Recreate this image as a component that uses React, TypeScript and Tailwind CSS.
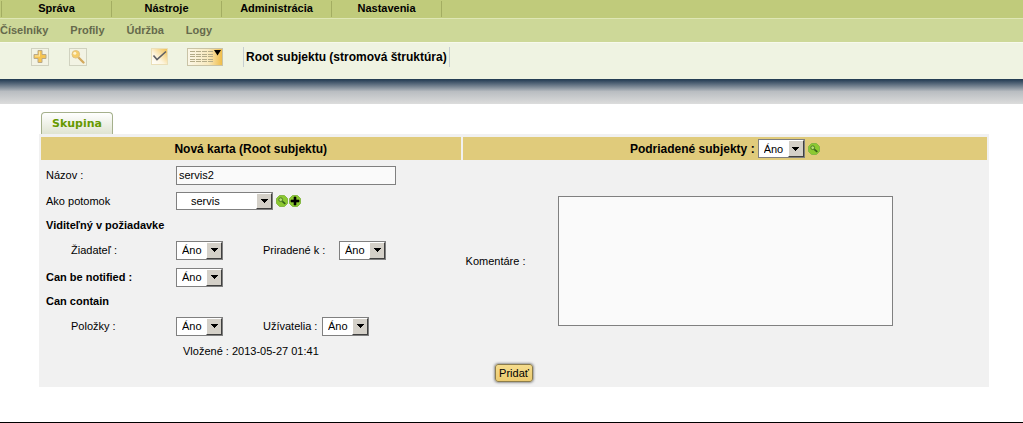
import { useState } from "react";
import type { ReactNode } from "react";

const menu = ["Správa", "Nástroje", "Administrácia", "Nastavenia"];
const submenu = ["Číselníky", "Profily", "Údržba", "Logy"];

type SelectProps = {
    id: string;
    options?: string[];
    className?: string;
}

function Select({ id, options = ["Áno", "Nie"], className = "w-[47px] h-[19px] pl-[5px]" }: SelectProps) {
    return (
        <span className="relative inline-flex">
            <select id={id} className={`appearance-none border border-[#808080] bg-white pr-4 text-[11px] leading-4 font-normal text-black outline-none ${className}`}>
                {options.map((option) => <option key={option}>{option}</option>)}
            </select>
            <span className="pointer-events-none absolute right-px top-px bottom-px flex w-4 items-center justify-center border border-t-white border-l-white border-r-[#404040] border-b-[#404040] bg-[#d4d0c8]">
                <svg width="7" height="4" viewBox="0 0 7 4" shapeRendering="crispEdges"><path d="M0 0h7v1H6v1H5v1H4v1H3V3H2V2H1V1H0z" /></svg>
            </span>
        </span>
    )
}

function GreenSearch() {
    return (
        <svg width="12" height="12" viewBox="0 0 12 12">
            <path d="M3.500 .5h5L11.500 3.500v5L8.500 11.500h-5L.5 8.500v-5z" fill="#8cc932" stroke="#86b846" />
            <circle cx="4.700" cy="4.700" r="1.900" fill="#b5e070" stroke="#4c7a28" />
            <path d="M6.300 6.300l3 2.600" stroke="#35601a" strokeWidth="1.600" />
        </svg>
    )
}

function GreenPlus() {
    return (
        <svg width="12" height="12" viewBox="0 0 12 12">
            <path d="M3.500 .5h5L11.500 3.500v5L8.500 11.500h-5L.5 8.500v-5z" fill="#8cc932" stroke="#86b846" />
            <path d="M5 2h2v3h3v2H7v3H5V7H2V5h3z" fill="#000" stroke="#000" strokeWidth=".6" />
        </svg>
    )
}

function Toolbar() {
    return (
        <div className="flex h-[37px] items-start border-t border-[#f7f9ec] bg-[#eff3e2] pl-[31px] pt-1">
            <button aria-label="Pridať kartu" className="mt-px">
                <svg width="18" height="18" viewBox="0 0 18 18">
                    <rect x=".5" y=".5" width="17" height="17" fill="#f2f3e4" stroke="#d0d2c0" />
                    <path d="M8 2.500h3v4h4v4h-4v4H7v-4H3v-4h4v-4z" fill="#f6c552" stroke="#b9a988" strokeLinejoin="round" />
                    <path d="M8 3.500v4H4v1h5v-5z" fill="#fce6a4" />
                </svg>
            </button>
            <button aria-label="Hľadať" className="mt-px ml-5">
                <svg width="18" height="18" viewBox="0 0 18 18">
                    <rect x=".5" y=".5" width="17" height="17" fill="#f2f3e4" stroke="#d0d2c0" />
                    <path d="M9.500 9.500l5 5" stroke="#d3a95e" strokeWidth="2.400" strokeLinecap="round" />
                    <circle cx="6.800" cy="6.300" r="3.800" fill="#f6cd69" stroke="#dfc182" />
                    <circle cx="5.800" cy="5.300" r="1.500" fill="#fff3cf" />
                </svg>
            </button>
            <button aria-label="Označiť" className="mt-px ml-16">
                <svg width="17" height="17" viewBox="0 0 17 17">
                    <defs>
                        <linearGradient id="checkFill" x1="1" y1="0" x2="0" y2="1">
                            <stop offset="0" stopColor="#efbd4b" />
                            <stop offset=".6" stopColor="#fdf5df" />
                            <stop offset="1" stopColor="#fff" />
                        </linearGradient>
                    </defs>
                    <rect x=".5" y=".5" width="16" height="16" fill="url(#checkFill)" stroke="#eadfb9" />
                    <path d="M2.500 7.500L6 11.500 15 3.500" fill="none" stroke="#5f6065" strokeWidth="1.600" />
                </svg>
            </button>
            <button aria-label="Zoznam" className="mt-px ml-[19px]">
                <svg width="36" height="18" viewBox="0 0 36 18">
                    <defs>
                        <linearGradient id="listFill">
                            <stop offset="0" stopColor="#fbf7e8" />
                            <stop offset=".6" stopColor="#f8e9bd" />
                            <stop offset="1" stopColor="#efbb45" />
                        </linearGradient>
                    </defs>
                    <rect x=".5" y=".5" width="35" height="17" fill="url(#listFill)" stroke="#c9c3a6" />
                    <path d="M3 3.500h23M3 6.500h23M3 8.500h23M3 11.500h23M3 13.500h23" stroke="#b3ab88" strokeDasharray="5 1" />
                    <path d="M27 2h7l-3.500 5.500z" />
                </svg>
            </button>
            <h1 className="ml-5 h-5 border-x border-[#c6ced0] px-0.5 text-[12px] leading-5 font-bold text-black">Root subjektu (stromová štruktúra)</h1>
        </div>
    )
}

function Row({ className = "h-[26px]", children }: { className?: string; children: ReactNode }) {
    return <div className={`flex items-center pl-[5px] ${className}`}>{children}</div>
}

export default function App() {
    const [nazov, setNazov] = useState("servis2");
    const [komentare, setKomentare] = useState("");

    return (
        <div className="bg-white font-['Liberation_Sans',Arial,sans-serif] text-[11px] leading-4 text-black">
            <nav className="flex h-[18px] bg-[#c0cb7b] pl-px">
                {menu.map((item) => (
                    <a key={item} href="#" className="my-px w-[110px] border-l border-[#a3ad62] text-center font-bold leading-[14px]">{item}</a>
                ))}
                <span className="my-px border-l border-[#a3ad62]" />
            </nav>
            <nav className="flex h-6 gap-[22px] border-t border-[#dfe7b5] bg-[#cdd898] font-bold leading-[23px] text-[#666a4c]">
                {submenu.map((item) => <a key={item} href="#">{item}</a>)}
            </nav>
            <Toolbar />
            <div className="h-[25px] bg-linear-to-b from-[#1f3850] via-[#b9bdc1] via-50% to-[#dcdcdc]" />

            <main className="pt-2 pr-[34px] pl-[39px]">
                <div className="pl-0.5">
                    <button className="block h-[22px] rounded-t-[4px] border border-b-0 border-[#a5b08c] bg-linear-to-b from-white to-[#dfe4d2] px-[10px] font-['DejaVu_Sans',Verdana,sans-serif] text-[11px] font-bold text-[#669900]">Skupina</button>
                </div>
                <form className="bg-[#f1f1f1] px-0.5 pt-[3px] pb-[3px]" onSubmit={(e) => e.preventDefault()}>
                    <div className="grid grid-cols-[4fr_5fr] gap-x-0.5">
                        <h2 className="flex h-[23px] items-center justify-center bg-[#e0cb7b] text-[12px] font-bold">Nová karta (Root subjektu)</h2>
                        <div className="flex h-[23px] items-center justify-center gap-[3px] bg-[#e0cb7b] text-[12px] font-bold">
                            <label htmlFor="podriadene">Podriadené subjekty :</label>
                            <Select id="podriadene" />
                            <button type="button" aria-label="Hľadať subjekty"><GreenSearch /></button>
                        </div>

                        <div className="pt-0.5">
                            <Row>
                                <label htmlFor="nazov" className="w-[130px]">Názov :</label>
                                <input id="nazov" type="text" className="h-[19px] w-[220px] border border-[#808080] bg-[#fafafa] px-0.5 text-[11px] outline-none" value={nazov} onChange={(e) => setNazov(e.target.value)} />
                            </Row>
                            <Row>
                                <label htmlFor="potomok" className="w-[130px]">Ako potomok</label>
                                <Select id="potomok" options={["servis"]} className="w-[97px] h-[18px] pl-[14px]" />
                                <button type="button" aria-label="Hľadať" className="ml-[3px]"><GreenSearch /></button>
                                <button type="button" aria-label="Pridať" className="ml-px"><GreenPlus /></button>
                            </Row>
                            <Row className="h-[22px] font-bold">Viditeľný v požiadavke</Row>
                            <Row className="h-7">
                                <label htmlFor="ziadatel" className="w-[130px] pl-[25px]">Žiadateľ :</label>
                                <Select id="ziadatel" />
                                <label htmlFor="priradene" className="ml-10 w-[76px]">Priradené k :</label>
                                <Select id="priradene" />
                            </Row>
                            <Row>
                                <label htmlFor="notified" className="w-[130px] font-bold">Can be notified :</label>
                                <Select id="notified" />
                            </Row>
                            <Row className="h-[22px] font-bold">Can contain</Row>
                            <Row className="h-7">
                                <label htmlFor="polozky" className="w-[130px] pl-[25px]">Položky :</label>
                                <Select id="polozky" />
                                <label htmlFor="uzivatelia" className="ml-10 w-[59px]">Užívatelia :</label>
                                <Select id="uzivatelia" />
                            </Row>
                            <Row className="h-[22px]">
                                <p className="ml-[137px]">Vložené : 2013-05-27 01:41</p>
                            </Row>
                        </div>

                        <div className="flex items-center pl-[3px]">
                            <label htmlFor="komentare" className="w-[92px]">Komentáre :</label>
                            <textarea id="komentare" className="h-[130px] w-[335px] resize-none border border-[#808080] bg-[#fafafa] p-0.5 text-[11px] outline-none" value={komentare} onChange={(e) => setKomentare(e.target.value)} />
                        </div>
                    </div>
                    <div className="flex h-[22px] items-center justify-center">
                        <button type="submit" className="h-[18px] rounded-[3px] border border-[#8d7d4b] bg-linear-to-b from-[#f5dc8c] to-[#eccb70] px-[3px] text-[11px] leading-4 shadow-[0_0_3px_#333]">Pridať</button>
                    </div>
                </form>
            </main>
            <footer className="mt-[35px] border-b border-black" />
        </div>
    )
}
